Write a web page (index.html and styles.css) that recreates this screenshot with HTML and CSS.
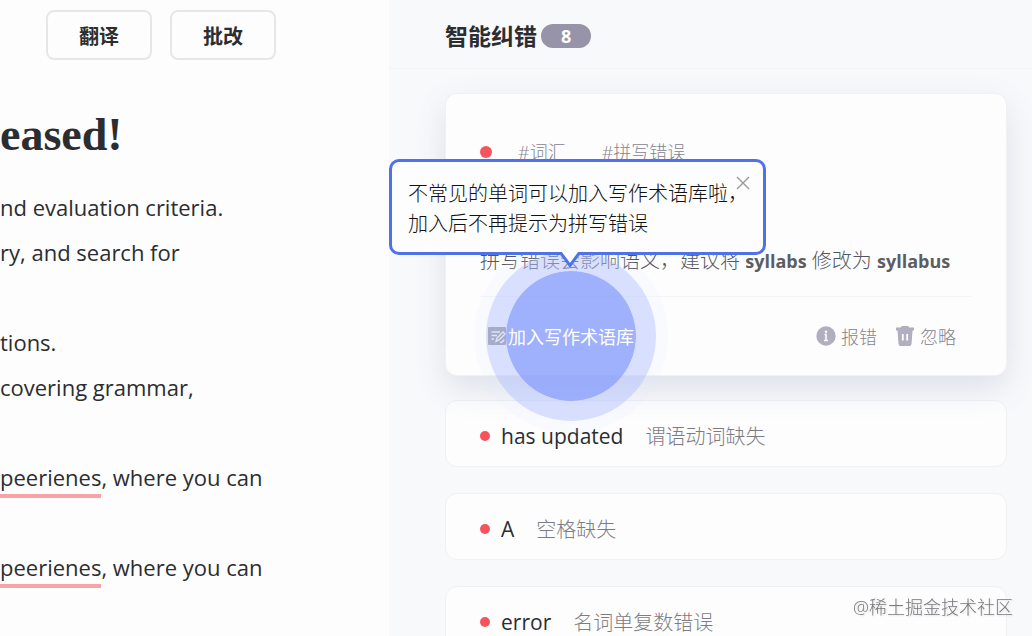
FILE: index.html
```html
<!DOCTYPE html>
<html lang="zh-CN">
<head>
<meta charset="utf-8">
<title>智能纠错</title>
<link rel="stylesheet" href="styles.css">
</head>
<body>
<main class="editor">
	<div class="toolbar">
		<button type="button">翻译</button>
		<button type="button">批改</button>
	</div>
	<h1>eased!</h1>
	<div class="doc">
		<p>nd evaluation criteria.<br>ry, and search for</p>
		<p>tions.<br>covering grammar,</p>
		<p><span class="wrong">peerienes</span>, where you can</p>
		<p><span class="wrong">peerienes</span>, where you can</p>
	</div>
</main>

<aside class="panel">
	<header>
		<h2>智能纠错</h2>
		<span class="count">8</span>
	</header>

	<div class="list">
		<section class="card">
			<div class="tags">
				<span class="dot"></span>
				<span>#词汇</span>
				<span>#拼写错误</span>
			</div>
			<p class="explain">拼写错误会影响语义，建议将 <b>syllabs</b> 修改为 <b>syllabus</b></p>
			<div class="actions">
				<button type="button" class="add">
					<svg width="18" height="18" viewBox="0 0 18 18">
						<rect width="18" height="18" rx="1" fill="#a5abc8"/>
						<path d="M3.500 5H12M3.500 8.500H9M3.500 12H6M8 14.500l1-3.500 6-6 2 2-6 6zM12 15.500q3 0 4-3" fill="none" stroke="#dfe4fa" stroke-width="1.400"/>
					</svg>
					<span class="pulse"><span class="label">加入写作术语库</span></span>
				</button>
				<button type="button" class="report">
					<svg width="20" height="20" viewBox="0 0 20 20">
						<circle cx="10" cy="10" r="9.700" fill="#b0aebf"/>
						<path d="M8.500 8.500H10V14.500M8 14.500h4" fill="none" stroke="#fff" stroke-width="1.500"/>
						<circle cx="10" cy="5.800" r="1.200" fill="#fff"/>
					</svg>
					报错
				</button>
				<button type="button">
					<svg width="20" height="20" viewBox="0 0 20 20">
						<path d="M1 1.500h4.500L7 0h6l1.500 1.500H19V4.500h-1.500l-1 13.500q-.2 2-2 2h-9q-1.800 0-2-2L2.500 4.500H1z" fill="#b0aebf"/>
						<path d="M7.800 8v6.500M12.200 8v6.500" stroke="#fff" stroke-width="1.800"/>
					</svg>
					忽略
				</button>
				<div class="tip" role="dialog">
					不常见的单词可以加入写作术语库啦，<br>加入后不再提示为拼写错误
					<button type="button" class="close" aria-label="关闭">
						<svg width="14" height="14" viewBox="0 0 14 14">
							<path d="M1 1l12 12M13 1L1 13" stroke="#999" stroke-width="1.400"/>
						</svg>
					</button>
					<svg class="arrow" width="22" height="17" viewBox="0 0 22 17">
						<path d="M1 0h20v1L11 14 1 1z" fill="#fdfdfe"/>
						<path d="M1 0l10 13.500L21 0" fill="none" stroke="#4f72ea" stroke-width="3"/>
					</svg>
				</div>
			</div>
		</section>

		<section class="row"><span class="dot"></span><span class="word">has updated</span><span class="kind">谓语动词缺失</span></section>
		<section class="row"><span class="dot"></span><span class="word">A</span><span class="kind">空格缺失</span></section>
		<section class="row"><span class="dot"></span><span class="word">error</span><span class="kind">名词单复数错误</span></section>
	</div>
</aside>
<div class="watermark">@稀土掘金技术社区</div>
</body>
</html>
```
FILE: styles.css
```css
*, *::before {
	box-sizing: border-box;
}
body {
	margin: 0;
	height: 100vh;
	display: flex;
	overflow: hidden;
	background: #fdfdfd;
	color: #2b2d31;
	font-family: "Open Sans", "Noto Sans CJK SC", sans-serif;
	font-size: 22px;
}
button {
	font-family: inherit;
	color: inherit;
	padding: 0;
	border: 0;
	background: none;
	cursor: pointer;
}
svg {
	display: block;
	flex: none;
}
h1, h2, p {
	margin: 0;
}

/* editor */
.editor {
	flex: 0 0 37.7%;
	min-width: 0;
}
.toolbar {
	display: flex;
	gap: 18px;
	padding: 10px 0 0 46px;
}
.toolbar button {
	width: 106px;
	height: 50px;
	border: 2px solid #e7e7e9;
	border-radius: 8px;
	font-size: 20px;
	font-weight: bold;
}
.editor h1 {
	margin-top: 48px;
	font: bold 46px/54px "Liberation Serif", serif;
}
.doc {
	margin-top: 23px;
	line-height: 45px;
}
.doc p {
	margin-bottom: 45px;
	white-space: nowrap;
}
.wrong {
	padding-bottom: 2px;
	border-bottom: 4px solid #f8a3aa;
}

/* correction panel */
.panel {
	flex: 1;
	min-width: 0;
	background: #f8f9fb;
}
.panel header {
	display: flex;
	align-items: center;
	gap: 4px;
	height: 69px;
	padding: 4px 0 0 56px;
	border-bottom: 1px solid #f2f4f6;
}
.panel header h2 {
	font-size: 23px;
	line-height: 32px;
}
.count {
	width: 50px;
	border-radius: 12px;
	background: #9793a8;
	color: #fff;
	font-size: 18px;
	font-weight: bold;
	line-height: 24px;
	text-align: center;
}
.list {
	padding: 24px 25px 0 56px;
}
.dot {
	flex: none;
	width: 10px;
	height: 10px;
	border-radius: 50%;
	background: #f6545c;
}
.card {
	position: relative;
	z-index: 1;
	margin-bottom: 24px;
	padding: 44px 34px 12px;
	border: 1px solid #eff1f5;
	border-radius: 12px;
	background: #fdfdfe;
	box-shadow: 0 12px 32px rgba(80, 100, 140, .16);
}
.tags {
	display: flex;
	align-items: center;
	gap: 36px;
	height: 28px;
	font-size: 18px;
	font-weight: 300;
	line-height: 26px;
	color: #85848f;
}
.tags .dot {
	width: 12px;
	height: 12px;
	margin-right: -10px;
}
.explain {
	margin-top: 80px;
	padding-bottom: 20px;
	border-bottom: 1px solid #f4f5f7;
	font-size: 20px;
	font-weight: 300;
	line-height: 30px;
	white-space: nowrap;
	color: #55565c;
}
.explain b {
	font-size: 18px;
	font-weight: bold;
	color: #5c5d62;
}
.actions {
	position: relative;
	display: flex;
	align-items: center;
	gap: 18px;
	height: 66px;
	padding: 12px 16px 0 8px;
}
.actions button {
	display: flex;
	align-items: center;
	gap: 5px;
	font-size: 18px;
	font-weight: 300;
	color: #85848f;
}
.actions .add {
	gap: 2px;
	color: #fff;
	font-weight: normal;
}
.add svg {
	position: relative;
	z-index: 1;
}
.actions .report {
	margin-left: auto;
}
.pulse {
	position: relative;
}
.pulse::before {
	content: "";
	position: absolute;
	left: 50%;
	top: 50%;
	width: 170px;
	height: 170px;
	border: 20px solid rgba(180, 193, 255, .5);
	border-radius: 50%;
	background: rgba(135, 158, 252, .8);
	background-clip: padding-box;
	box-shadow: 0 0 0 12px rgba(225, 232, 255, .15);
	transform: translate(-50%, -50%);
}
.label {
	position: relative;
}

/* tooltip */
.tip {
	position: absolute;
	left: -91px;
	bottom: 108px;
	padding: 17px 15px 13px 16px;
	border: 3px solid #4f72ea;
	border-radius: 10px;
	background: #fdfdfe;
	font-size: 20px;
	font-weight: 300;
	line-height: 30px;
	white-space: nowrap;
	color: #111;
}
.tip .close {
	position: absolute;
	right: 13px;
	top: 14px;
}
.arrow {
	position: absolute;
	left: 167px;
	top: 100%;
}

.row {
	display: flex;
	align-items: center;
	height: 67px;
	margin-bottom: 26px;
	padding: 4px 0 0 34px;
	border: 1px solid #eff1f4;
	border-radius: 12px;
	background: #fdfdfe;
}
.word {
	margin: 0 22px 0 11px;
	font-size: 21px;
}
.kind {
	font-size: 20px;
	font-weight: 300;
	color: #7c7c82;
}
.watermark {
	position: fixed;
	right: 19px;
	bottom: 16px;
	font-size: 18px;
	font-weight: 300;
	line-height: 26px;
	color: #77787c;
	text-shadow: 1px 1px 2px #ddd;
}
```
